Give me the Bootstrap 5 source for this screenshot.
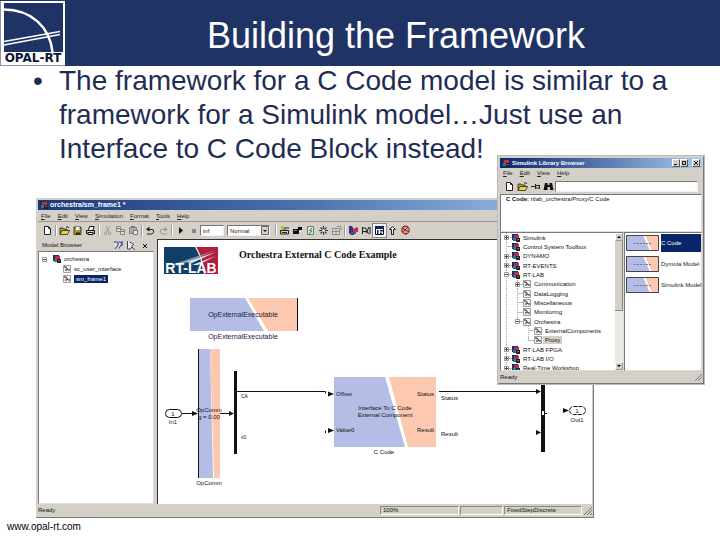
<!DOCTYPE html>
<html lang="en">
<head>
<meta charset="utf-8">
<meta name="viewport" content="width=device-width, initial-scale=1">
<title>Building the Framework</title>
<link href="https://cdn.jsdelivr.net/npm/bootstrap@5.3.0/dist/css/bootstrap.min.css" rel="stylesheet">
<style>
body{font-family:"Liberation Sans",Arial,sans-serif;background:#fff;color:#000}
.slide{min-height:100vh}
.topbar{background:#1f3364;height:66px}
.brandmark{width:65px;height:66px}
.topbar h1{font-size:36px;line-height:40px;padding:5px 0 0 7px}
.points{color:#1f2d55;font-size:28px;line-height:34px;padding:0 40px 0 59px;margin:-2px 0 0;list-style:none}
.points li::before{content:"•";float:left;margin-left:-26px}
.win{background:#d4d0c8;border:1px solid #d4d0c8;border-right-color:#777;border-bottom-color:#777;font-size:6px;line-height:8px;padding:1px;color:#111}
.model-win{margin-left:5%;width:77.5%;margin-top:32px}
.lib-win{top:156px;right:16px;width:206px;box-shadow:0 0 0 1px #bbb}
.titlebar{background:linear-gradient(90deg,#0a246a,#a6caf0);color:#fff;font-weight:700;font-size:7px;height:10px;padding:0 2px;gap:2px}
.lib-win .titlebar{font-size:6px}
.model-win .titlebar{background:linear-gradient(90deg,#1a397c,#4f74b0 50%,#a6caf0)}
.menus{height:11px;gap:7px;padding:0 3px}
.lib-win .menus{height:10px}
.menus a{color:#222;text-decoration:none}
.menus a::first-letter{text-decoration:underline}
.tools{border-top:1px solid #9a968e;height:18px;padding-left:3px}
.lib-win .tools{height:16px}
.tools .tb{width:13px;height:13px;padding:1px;border:0;background:none;display:flex;flex:none}
.tools .tb.pressed{background:#f4f4f8;outline:1px solid #888}
.tb svg{width:11px;height:11px}
.vsep{width:4px;height:11px;flex:none;background:linear-gradient(90deg,#999 50%,#fff 50%) center/2px 100% no-repeat}
.field{border:1px solid #777;border-right-color:#eee;border-bottom-color:#eee;background:#fff;font-size:6px;line-height:8px;height:11px;padding:0 2px;border-radius:0;min-width:0;color:#222}
.stoptime{width:24px}
.mode{width:43px;appearance:none;background:#fff}
.pick{margin-left:3px}
.pick svg{right:1px;top:1px;width:8px;height:9px;pointer-events:none}
.browser{width:119px;flex:none;border-right:3px solid #d4d0c8}
.model-win .browser-head{height:12px;padding:0 3px 0 4px}
.sunk{background:#fff;border:1px solid #777;border-right-color:#ddd;border-bottom-color:#ddd}
.canvas{background:#fff;border-left:1px solid #333;border-top:1px solid #333;min-width:0}
.canvas svg{display:block;width:100%;height:auto}
.tree{list-style:none;margin:0;padding:0}
.tree li{display:flex;align-items:center;white-space:nowrap}
.tree svg{width:8px;height:8px;flex:none;margin-right:3px}
.model-tree{padding:2px 0}
.model-tree li{height:10px}
.model-tree li.kid{padding-left:24px}
.indent{width:3px}
.picked{background:#0a246a;color:#fff;padding:0 2px}
.faded{background:#d4d0c8;padding:0 2px;margin-left:-2px}
.status{height:12px;padding-top:2px}
.lib-win .status{height:11px}
.pane{border:1px solid #888;border-right-color:#fff;border-bottom-color:#fff;height:9px;line-height:7px;padding-left:2px;margin-right:1px}
.pane-zoom{width:79px}
.pane-time{width:43px}
.pane-solver{width:78px}
.lib-body{height:139px}
.lib-tree{height:140px;display:flex;flex-direction:column}
.lib-tree li{flex:1 1 0}
.g{width:11px;height:100%;flex:none;display:flex;align-items:center;justify-content:center}
.v{background:repeating-linear-gradient(#aaa 0 1px,#fff 1px 2px) 5px 0/1px 100% no-repeat}
.h{background:linear-gradient(#bbb,#bbb) 100% 50%/6px 1px no-repeat,repeating-linear-gradient(#aaa 0 1px,#fff 1px 2px) 5px 0/1px 100% no-repeat}
.e{background:linear-gradient(#bbb,#bbb) 100% 50%/6px 1px no-repeat,linear-gradient(#bbb,#bbb) 5px 0/1px 50% no-repeat}
.tree .g svg{width:5px;height:5px;margin:0}
.desc{height:38px;padding:0 5px}
.scroller{width:8px;background:#ebe9e4}
.scroller button{height:8px;padding:0;border:1px solid #999;border-top-color:#fff;border-left-color:#fff;background:#d4d0c8;display:flex}
.thumb{height:70px;background:#d4d0c8;border-right:1px solid #888;border-bottom:1px solid #888}
.blocks{width:78px;padding:1px 0 0 1px;gap:3px}
.blocks a{height:18px;color:#222;text-decoration:none;gap:2px;white-space:nowrap}
.blocks a svg{width:33px;height:16px;flex:none}
.blocks a span{line-height:18px}
.blocks a.on span{background:#0a246a;color:#fff}
.winbtns button{width:8px;height:8px;padding:0;border:1px solid #fff;border-right-color:#555;border-bottom-color:#555;background:#d4d0c8;display:flex}
.site{font-size:10px;line-height:12px;padding:3px 7px;color:#000}
.site a{color:#000;text-decoration:none}
</style>
<script src="https://cdn.jsdelivr.net/npm/bootstrap@5.3.0/dist/js/bootstrap.bundle.min.js"></script>
</head>
<body>
<svg width="0" height="0" class="position-absolute" aria-hidden="true">
<defs>
<symbol id="lib" viewBox="0 0 8 8"><path fill="#1c2a78" d="M0 0h6v6H0z"/><path fill="#c22a44" d="M2 1h5v3H2z"/><path fill="#288070" d="M1 4h3v3H1z"/><path fill="#222" d="M4 4h4v4H4z"/><path fill="#5a66c8" d="M5 5h2v1H5z"/></symbol>
<symbol id="sys" viewBox="0 0 8 8"><path fill="#eee" stroke="#888" stroke-width=".8" d="M.5.5h7v7h-7z"/><path fill="none" stroke="#222" d="M1 2h2l2 3h2M2 5h2"/></symbol>
<symbol id="plus" viewBox="0 0 5 5"><path fill="#fff" stroke="#999" d="M.5.5h4v4h-4z"/><path stroke="#222" stroke-width=".8" d="M1 2.5h3M2.5 1v3"/></symbol>
<symbol id="minus" viewBox="0 0 5 5"><path fill="#fff" stroke="#999" d="M.5.5h4v4h-4z"/><path stroke="#222" stroke-width=".8" d="M1 2.5h3"/></symbol>
<symbol id="new" viewBox="0 0 11 11"><path fill="#fff" stroke="#222" d="M2.500 1.500h4l2 2v6h-6z"/><path fill="none" stroke="#222" d="M6.500 1.500v2h2"/></symbol>
<symbol id="open" viewBox="0 0 11 11"><path fill="#b8a820" stroke="#222" stroke-width=".8" d="M1 9V3h3l1 1h3v2"/><path fill="#e4d840" stroke="#222" stroke-width=".8" d="M1 9.500l2-4h7.500l-2 4z"/><path fill="none" stroke="#222" d="M7 2q2-1 3 1"/></symbol>
<symbol id="save" viewBox="0 0 11 11"><path fill="#a89c28" stroke="#222" stroke-width=".8" d="M2 2h7v7.500H2z"/><path fill="#eee" d="M4 2h3.500v3H4z"/><path fill="#222" d="M4 7.500h4v2H4z"/></symbol>
<symbol id="print" viewBox="0 0 11 11"><path fill="#fff" stroke="#111" d="M3.500 5l1-3.500h4.500L8 5"/><path fill="#ccc" stroke="#111" d="M1.500 5.500h8v3h-8z"/><path fill="#fff" stroke="#111" d="M3 7.500h5v2H3z"/></symbol>
<symbol id="cut" viewBox="0 0 11 11"><path fill="none" stroke="#999" d="M4 1l3 6M8 1L4 7"/><circle cx="3.500" cy="8.500" r="1.300" fill="none" stroke="#999"/><circle cx="7.500" cy="8.500" r="1.300" fill="none" stroke="#999"/></symbol>
<symbol id="copy" viewBox="0 0 11 11"><path fill="#ddd" stroke="#888" d="M1.500 1.500h4v5h-4zM5.500 4.500h4v5h-4z"/><path stroke="#777" d="M2 3.500h3M6 6.500h3"/></symbol>
<symbol id="paste" viewBox="0 0 11 11"><path fill="#aaa" stroke="#888" d="M1.500 2.500h7v6h-7z"/><path fill="#eee" stroke="#777" d="M5.500 5.500h4v4h-4z"/><path fill="#777" d="M3 1h4v2H3z"/></symbol>
<symbol id="undo" viewBox="0 0 11 11"><path fill="none" stroke="#222" d="M3 4.500h5q2 3-1 4.500H2"/><path fill="#222" d="M1 4.500l3.500-3v5z"/></symbol>
<symbol id="redo" viewBox="0 0 11 11"><path fill="none" stroke="#999" d="M8 4.500H3q-2 3 1 4.500h5"/><path fill="#999" d="M10 4.500l-3.500-3v5z"/></symbol>
<symbol id="play" viewBox="0 0 11 11"><path fill="#111" d="M4 2l4 3.500L4 9z"/></symbol>
<symbol id="stop" viewBox="0 0 11 11"><path fill="#888" d="M4 4h4v4H4z"/></symbol>
<symbol id="build" viewBox="0 0 11 11"><path fill="#c8b838" d="M2 1h3v4H2z"/><path fill="none" stroke="#222" d="M1.500 5.500h8v3.500h-8zM6 2v4M3 7.500h5M7 3h3"/></symbol>
<symbol id="target" viewBox="0 0 11 11"><path fill="#111" d="M1 4h6v5H1zM6 2h4v3H6z"/><path stroke="#48b" d="M2 5.500h3"/><path stroke="#fff" d="M7 6.500h2"/></symbol>
<symbol id="page" viewBox="0 0 11 11"><path fill="#d8e8d0" stroke="#777" d="M2.500 1.500h6v8h-6z"/><path fill="none" stroke="#285" d="M7 3L4.500 5.500 7 6 4 9"/></symbol>
<symbol id="gear" viewBox="0 0 11 11"><path stroke="#333" stroke-width="1.100" d="M1 5.500h9M5.500 1v9M2.500 2.500l6 6M8.500 2.500l-6 6"/><circle cx="5.500" cy="5.500" r="1.500" fill="#eee"/></symbol>
<symbol id="table" viewBox="0 0 11 11"><path fill="#ddd" stroke="#888" d="M1.500 3.500h7v6h-7zM1.500 6.500h7M5 3v6M6 1.500h4v4"/></symbol>
<symbol id="lib2" viewBox="0 0 11 11"><path fill="#3a2b8c" d="M1 1h3l2 4v5H3L1 8z"/><path fill="#c02860" d="M5 4l5-2v5H5z"/><path fill="#266" d="M3 7h5v2H3z"/></symbol>
<symbol id="explore" viewBox="0 0 11 11"><path fill="none" stroke="#222" d="M1.500 2v7M1.500 3h3l3 6M8 2L5 8M9 4v5M2 6.500h4M7 3h3"/></symbol>
<symbol id="browse" viewBox="0 0 11 11"><path fill="#fff" stroke="#112" d="M1.500 2.500h8v7h-8z"/><path fill="#112060" d="M1 1h9v3H1zM3 5h1.500v4H3zM6 5h3v1.500H6zM6 7.500h2V9H6z"/></symbol>
<symbol id="up" viewBox="0 0 11 11"><path fill="#eee" stroke="#222" d="M5.500 1.500l3 3h-2v5h-2v-5h-2z"/></symbol>
<symbol id="debug" viewBox="0 0 11 11"><circle cx="5.500" cy="5" r="3.800" fill="#d8a8a0" stroke="#a22" stroke-width="1.200"/><path stroke="#622" d="M2 3l7 4M3 7l5-5M6 8v2"/></symbol>
<symbol id="pin" viewBox="0 0 11 11"><path stroke="#222" d="M1 5.500h4M5.500 3v5M6 4.500h4M6 7h4M9.500 4v4"/></symbol>
<symbol id="find" viewBox="0 0 11 11"><path fill="#111" d="M2 2h2.500v2h2V2H9l1.500 7H7V6H4.500v3H.500z"/></symbol>
<symbol id="chip" viewBox="0 0 33 16"><path fill="#b3bde5" d="M0 0h17l7 16H0z"/><path fill="#fdc8b0" d="M19 0h14v16h-7z"/><path fill="none" stroke="#444" d="M.5.5h32v15H.5z"/><path stroke="#778" stroke-dasharray="2 1" d="M8 8.500h17"/></symbol>
</defs>
</svg>

<main class="slide position-relative">
<header class="topbar d-flex">
<svg class="brandmark flex-shrink-0" viewBox="0 0 65 66" role="img" aria-label="OPAL-RT logo">
<path fill="#8a93ab" d="M0 1h65v65H0z"/><path fill="#fff" d="M1 1h64v64H1z"/><path fill="#1f3364" d="M4 3h59v49H4z"/>
<path fill="none" stroke="#fff" stroke-width="2.500" d="M4 9.500C31 9.500 50 27 52.500 52"/>
<path fill="none" stroke="#fff" stroke-width="1.400" d="M4 41.500L60 31.500M4 45L60 34.500"/>
<text x="33" y="62" text-anchor="middle" font-size="12" font-weight="700" fill="#0c1638" font-family="DejaVu Sans, sans-serif">OPAL-RT</text>
</svg>
<h1 class="flex-grow-1 text-center text-white fw-normal m-0 align-self-center">Building the Framework</h1>
</header>
<ul class="points"><li>The framework for a C Code model is similar to a<br> framework for a Simulink model…Just use an<br> Interface to C Code Block instead!</li></ul>

<section class="win model-win" aria-label="Model window">
<div class="titlebar d-flex align-items-center"><svg width="8" height="8"><use href="#lib"/></svg>orchestra/sm_frame1 *</div>
<nav class="menus d-flex align-items-center"><a href="#">File</a><a href="#">Edit</a><a href="#">View</a><a href="#">Simulation</a><a href="#">Format</a><a href="#">Tools</a><a href="#">Help</a></nav>
<div class="tools d-flex align-items-center">
<button class="tb" aria-label="New"><svg><use href="#new"/></svg></button><span class="vsep"></span>
<button class="tb" aria-label="Open"><svg><use href="#open"/></svg></button><button class="tb" aria-label="Save"><svg><use href="#save"/></svg></button><button class="tb" aria-label="Print"><svg><use href="#print"/></svg></button><span class="vsep"></span>
<button class="tb" aria-label="Cut"><svg><use href="#cut"/></svg></button><button class="tb" aria-label="Copy"><svg><use href="#copy"/></svg></button><button class="tb" aria-label="Paste"><svg><use href="#paste"/></svg></button><span class="vsep"></span>
<button class="tb" aria-label="Undo"><svg><use href="#undo"/></svg></button><button class="tb" aria-label="Redo"><svg><use href="#redo"/></svg></button><span class="vsep"></span>
<button class="tb" aria-label="Start"><svg><use href="#play"/></svg></button><button class="tb" aria-label="Stop"><svg><use href="#stop"/></svg></button>
<input class="field stoptime" aria-label="Stop time" value="inf">
<span class="pick position-relative d-flex"><select class="field mode" aria-label="Simulation mode"><option>Normal</option></select><svg class="position-absolute" viewBox="0 0 8 9"><path fill="#d4d0c8" stroke="#666" d="M.5.5h7v8h-7z"/><path fill="#111" d="M2 4h4L4 6z"/></svg></span>
<span class="vsep ms-1"></span>
<button class="tb" aria-label="Build"><svg><use href="#build"/></svg></button><button class="tb" aria-label="Target"><svg><use href="#target"/></svg></button><button class="tb" aria-label="Report"><svg><use href="#page"/></svg></button><button class="tb" aria-label="Update"><svg><use href="#gear"/></svg></button><button class="tb" aria-label="Table"><svg><use href="#table"/></svg></button><span class="vsep"></span>
<button class="tb" aria-label="Library"><svg><use href="#lib2"/></svg></button><button class="tb" aria-label="Explorer"><svg><use href="#explore"/></svg></button><button class="tb pressed" aria-label="Browser"><svg><use href="#browse"/></svg></button><button class="tb" aria-label="Up"><svg><use href="#up"/></svg></button><button class="tb" aria-label="Debug"><svg><use href="#debug"/></svg></button>
</div>
<div class="d-flex">
<aside class="browser d-flex flex-column">
<div class="browser-head tools border-0 d-flex align-items-center"><span class="me-auto">Model Browser</span><button class="tb" aria-label="Links"><svg viewBox="0 0 11 11"><path fill="#dde" stroke="#223a80" d="M1 2h4v3l-3 4M6 1.500l3 2-3 5M9 1v5"/></svg></button><button class="tb" aria-label="Masks"><svg viewBox="0 0 11 11"><path fill="#eee" stroke="#446" d="M1.500 1v8h3l3-5-4-2M6 7l3 3"/></svg></button><button class="tb" aria-label="Close"><svg viewBox="0 0 11 11"><path stroke="#111" d="M4 4l4 4M8 4L4 8"/></svg></button></div>
<div class="sunk flex-grow-1">
<ul class="tree model-tree">
<li><span class="g"><svg><use href="#minus"/></svg></span><span class="indent"></span><svg><use href="#lib"/></svg>orchestra</li>
<li class="kid"><svg><use href="#sys"/></svg>sc_user_interface</li>
<li class="kid"><svg><use href="#sys"/></svg><span class="picked">sm_frame1</span></li>
</ul>
</div>
</aside>
<div class="canvas flex-grow-1">
<svg viewBox="158 240 434 264" font-family="Liberation Sans, Arial, sans-serif" font-size="6" fill="#111">
<g><path fill="#123f68" d="M164 247h54v27h-54z"/><path fill="#b31c3a" d="M196 247h22v27h-13q-3-15-9-27z"/><path fill="none" stroke="#fff" stroke-width="1.200" d="M195.500 247q6 9 9 27"/>
<path fill="#8098ac" d="M174 264l42-14-38 16z"/><path fill="#dfe6ec" d="M186 262l30-10-24 11zM192 265l24-9-18 9z"/>
<text x="191" y="273" text-anchor="middle" font-size="14" font-weight="700" fill="#fff">RT-LAB</text></g>
<text x="239" y="258" font-family="Liberation Serif, serif" font-size="10" font-weight="700">Orchestra External C Code Example</text>
<path fill="#b3bde5" d="M190 298h55l19 33h-74z"/><path fill="#fdc8b0" d="M248 298h49v33h-29z"/><path stroke="#111" d="M297.500 298v33"/>
<g text-anchor="middle"><text x="243" y="317" font-size="7" fill="#223">OpExternalExecutable</text><text x="243" y="339" font-size="7" fill="#314">OpExternalExecutable</text></g>
<path fill="#b3bde5" d="M198 349h12l3 129h-15z"/><path fill="#fdc8b0" d="M210 349h10v129h-6z"/><path stroke="#111" d="M198.500 349v129"/>
<g text-anchor="middle"><text x="209" y="412">OpComm</text><text x="209" y="419">g = 0.00</text><text x="209" y="485">OpComm</text>
<rect x="165.500" y="409.500" width="16" height="8" rx="4" fill="#fff" stroke="#111"/><text x="173" y="416">1</text><text x="173" y="424" fill="#413">In1</text>
<rect x="569.500" y="406.500" width="16" height="8" rx="4" fill="#fff" stroke="#111" stroke-dasharray="4 1"/><text x="577" y="413">1</text><text x="577" y="422">Out1</text></g>
<path fill="none" stroke="#111" d="M182 413.500h12M220 413.500h10M237 391.500h88.500v2M325.500 433v-2.500M439 391.500h98M545 413.500h2"/>
<path fill="#111" d="M192 411l6 2.500-6 2.500zM229 411l5 2.500-5 2.500zM328 391.500l6 2.500-6 2.500zM328 428l6 2.500-6 2.500zM536 389l5 2.500-5 2.500zM536 430l5 2.500-5 2.500zM563 408l6 2.500-6 2.500zM234 371h3v83h-3zM541 372h4v80h-4z"/>
<path fill="#fff" d="M542 411h2v4h-2z"/>
<text x="241" y="398" font-size="5">CA</text><text x="241" y="439" font-size="5">x0</text>
<path fill="#b3bde5" d="M334 377h51l20 70h-71z"/><path fill="#fdc8b0" d="M389 377h47v70h-28z"/>
<text x="336" y="396" fill="#314">Offset</text><text x="336" y="432">Value0</text>
<g text-anchor="end"><text x="434" y="396">Status</text><text x="434" y="432">Result</text></g>
<g text-anchor="middle"><text x="385" y="410">Interface To C Code</text><text x="385" y="417">External Component</text><text x="384" y="454">C Code</text></g>
<text x="441" y="400">Status</text><text x="441" y="436">Result</text>
</svg>
</div>
</div>
<footer class="status d-flex"><span class="flex-grow-1">Ready</span><span class="pane pane-zoom">100%</span><span class="pane pane-time"></span><span class="pane pane-solver">FixedStepDiscrete</span><svg width="9" height="9"><path stroke="#777" d="M1 9l8-8M4 9l5-5M7 9l2-2"/></svg></footer>
</section>

<section class="win lib-win position-absolute" aria-label="Simulink Library Browser">
<div class="titlebar d-flex align-items-center"><svg width="8" height="8"><use href="#lib"/></svg><span class="me-auto">Simulink Library Browser</span>
<span class="winbtns d-flex"><button aria-label="Minimize"><svg width="6" height="6"><path stroke="#111" d="M1 4.500h3"/></svg></button><button aria-label="Maximize"><svg width="6" height="6"><path fill="none" stroke="#111" d="M1.500 1.500h3v3h-3z"/></svg></button><button class="ms-1" aria-label="Close"><svg width="6" height="6"><path stroke="#111" d="M1 1l4 4M5 1L1 5"/></svg></button></span></div>
<nav class="menus d-flex align-items-center"><a href="#">File</a><a href="#">Edit</a><a href="#">View</a><a href="#">Help</a></nav>
<div class="tools border-0 d-flex align-items-center"><button class="tb" aria-label="New model"><svg><use href="#new"/></svg></button><button class="tb" aria-label="Open model"><svg><use href="#open"/></svg></button><button class="tb" aria-label="Stay on top"><svg><use href="#pin"/></svg></button><button class="tb" aria-label="Find"><svg><use href="#find"/></svg></button><input class="field flex-grow-1 me-1" aria-label="Search blocks"></div>
<div class="sunk desc"><b>C Code:</b> rtlab_orchestra/Proxy/C Code</div>
<div class="lib-body d-flex">
<div class="sunk d-flex flex-grow-1 overflow-hidden">
<ul class="tree lib-tree flex-grow-1">
<li><span class="g h"><svg><use href="#plus"/></svg></span><svg><use href="#lib"/></svg>Simulink</li>
<li><span class="g h"></span><svg><use href="#lib"/></svg>Control System Toolbox</li>
<li><span class="g h"><svg><use href="#plus"/></svg></span><svg><use href="#lib"/></svg>DYNAMO</li>
<li><span class="g h"><svg><use href="#plus"/></svg></span><svg><use href="#lib"/></svg>RT-EVENTS</li>
<li><span class="g h"><svg><use href="#minus"/></svg></span><svg><use href="#lib"/></svg>RT-LAB</li>
<li><span class="g v"></span><span class="g h"><svg><use href="#plus"/></svg></span><svg><use href="#sys"/></svg>Communication</li>
<li><span class="g v"></span><span class="g h"></span><svg><use href="#sys"/></svg>DataLogging</li>
<li><span class="g v"></span><span class="g h"></span><svg><use href="#sys"/></svg>Miscellaneous</li>
<li><span class="g v"></span><span class="g h"></span><svg><use href="#sys"/></svg>Monitoring</li>
<li><span class="g v"></span><span class="g e"><svg><use href="#minus"/></svg></span><svg><use href="#sys"/></svg>Orchestra</li>
<li><span class="g v"></span><span class="g"></span><span class="g h"></span><svg><use href="#sys"/></svg>ExternalComponents</li>
<li><span class="g v"></span><span class="g"></span><span class="g e"></span><svg><use href="#sys"/></svg><span class="faded">Proxy</span></li>
<li><span class="g h"><svg><use href="#plus"/></svg></span><svg><use href="#lib"/></svg>RT-LAB FPGA</li>
<li><span class="g h"><svg><use href="#plus"/></svg></span><svg><use href="#lib"/></svg>RT-LAB I/O</li>
<li><span class="g h"><svg><use href="#plus"/></svg></span><svg><use href="#lib"/></svg>Real-Time Workshop</li>
</ul>
<div class="scroller d-flex flex-column"><button aria-label="Scroll up"><svg width="6" height="6"><path d="M1 4h4L3 2z"/></svg></button><div class="thumb"></div><button class="mt-auto" aria-label="Scroll down"><svg width="6" height="6"><path d="M1 2h4L3 4z"/></svg></button></div>
</div>
<div class="sunk blocks d-flex flex-column flex-shrink-0">
<a href="#" class="on d-flex align-items-center"><svg><use href="#chip"/></svg><span class="flex-grow-1">C Code</span></a>
<a href="#" class="d-flex align-items-center"><svg><use href="#chip"/></svg><span>Dymola Model</span></a>
<a href="#" class="d-flex align-items-center"><svg><use href="#chip"/></svg><span>Simulink Model</span></a>
</div>
</div>
<footer class="status d-flex"><span class="flex-grow-1">Ready</span><svg width="8" height="8"><path stroke="#777" d="M1 8l7-7M4 8l4-4"/></svg></footer>
</section>
<footer class="site"><a href="#">www.opal-rt.com</a></footer>
</main>
</body>
</html>
